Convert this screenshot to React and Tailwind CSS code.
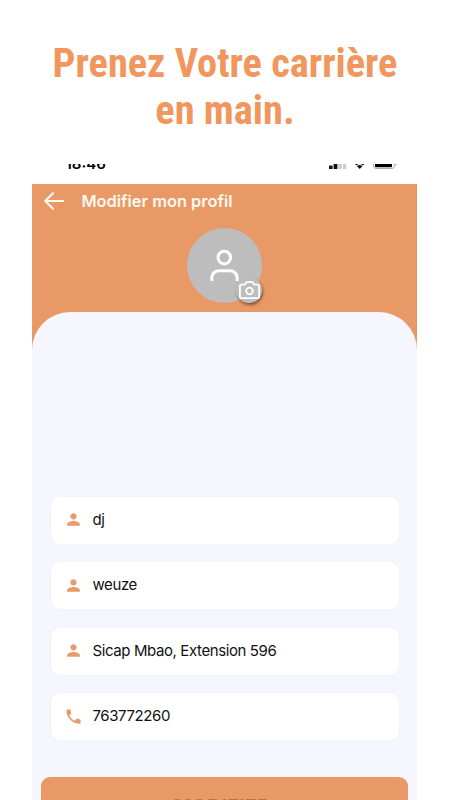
import { MdPerson, MdPhone } from "react-icons/md";

const fields = [
  { icon: MdPerson, value: "dj" },
  { icon: MdPerson, value: "weuze" },
  { icon: MdPerson, value: "Sicap Mbao, Extension 596" },
  { icon: MdPhone, value: "763772260" },
];

function StatusBar() {
  return (
    <div className="h-[19.5px] flex justify-between items-start overflow-hidden pl-[33.5px] pr-[20px]">
      <span className="text-[15px] leading-[18px] font-semibold text-black -mt-[9px]">18:46</span>

      {/* Signal, wifi and battery, cut off by the top edge */}
      <svg width="70" height="8" viewBox="0 0 70 8">
        <rect x="2" y="1.5" width="3.6" height="3.5" rx="0.6" fill="#111" />
        <rect x="6.6" y="0" width="3.8" height="5" rx="0.6" fill="#111" />
        <rect x="11.4" y="0" width="3.4" height="5" rx="0.6" fill="#ccc" />
        <rect x="16" y="0" width="3.2" height="5" rx="0.6" fill="#ccc" />
        <path d="M28 0h9.4l-1.5 1.4a5 5 0 0 0-6.4 0z" fill="#111" />
        <path d="M30 2.2a4 4 0 0 1 5.4 0L32.7 5z" fill="#111" />
        <path d="M46.5 0v1.8a2.7 2.7 0 0 0 2.7 2.7h15.6a2.7 2.7 0 0 0 2.7-2.7V0" fill="none" stroke="#aaa" />
        <path d="M69 0v1.5" stroke="#aaa" />
        <path d="M48 0h17v2.4a0.8 0.8 0 0 1-.8.8H48.8a.8.8 0 0 1-.8-.8z" fill="#000" />
      </svg>
    </div>
  );
}

function Header() {
  return (
    <div className="flex items-center pl-[12px] pt-[8.5px]">
      <svg width="20" height="18" viewBox="0 0 20 18" fill="none" stroke="#fff8ee" strokeWidth="2.2" strokeLinecap="round" strokeLinejoin="round">
        <path d="M19 9H1.5M9 1.2L1.2 9L9 16.8" />
      </svg>
      <h2 className="ml-[17.5px] -mt-[1px] text-[16.4px] leading-[18px] font-semibold text-[#fff8ee]">Modifier mon profil</h2>
    </div>
  );
}

function Avatar() {
  return (
    <div className="relative w-[75px] h-[75px] mt-[18px] mx-auto rounded-full bg-[#bdbdbd]">
      <svg width="75" height="75" viewBox="0 0 75 75" fill="none" stroke="#fff" strokeWidth="3">
        <circle cx="37.3" cy="29.6" r="6.3" />
        <path d="M24.8 53v-3.2a7 7 0 0 1 7-7h11.4a7 7 0 0 1 7 7V53" />
      </svg>

      {/* Photo button */}
      <div className="absolute left-[49px] top-[49px] w-[26px] h-[26px] rounded-full bg-[#bdbdbd] shadow-[1px_2px_3px_rgba(0,0,0,0.45)]">
        <svg width="26" height="26" viewBox="0 0 26 26" fill="none" stroke="#fff" strokeWidth="1.8" strokeLinejoin="round">
          <path d="M5.7 7.6h3.2l1.3-2.4h6.6l1.3 2.4h3.2a1.8 1.8 0 0 1 1.8 1.8v10a1.8 1.8 0 0 1-1.8 1.8H5.7a1.8 1.8 0 0 1-1.8-1.8v-10a1.8 1.8 0 0 1 1.8-1.8z" />
          <circle cx="13.5" cy="14" r="3.3" />
        </svg>
      </div>
    </div>
  );
}

function Field({ icon: Icon, value }) {
  return (
    <div className="h-[47px] flex items-center rounded-[9px] bg-white pl-[13.5px] shadow-[0_0_3px_rgba(0,0,0,0.04)]">
      <Icon className="size-[19px] -mt-[1px] text-[#e79b68]" />
      <span className="ml-[9.5px] text-[15px] tracking-[-0.4px] text-[#111]">{value}</span>
    </div>
  );
}

export default function App() {
  return (
    <main className="h-[800px] overflow-hidden bg-white font-['Inter',sans-serif]">
      <h1 className="h-[164px] pt-[40px] text-center text-[40.4px] leading-[47px] font-bold text-[#f1975e] font-['Roboto_Condensed','Roboto',sans-serif] [font-stretch:75%]">
        Prenez Votre carrière
        <br />
        en main.
      </h1>

      <div className="w-[385px] ml-[32px]">
        <StatusBar />
        <div className="h-[617px] bg-[#e89966]">
          <Header />
          <Avatar />

          <div className="h-[489px] mt-[9px] rounded-t-[38px] bg-[#f5f6fe] pt-[184.5px]">
            <div className="flex flex-col gap-[18.5px] pl-[18.5px] pr-[18px]">
              {fields.map((field) => (
                <Field key={field.value} {...field} />
              ))}
            </div>

            <button className="flex justify-center w-[367px] h-[60px] mt-[37px] ml-[9px] rounded-[9px] bg-[#e89966] pt-[17.5px] pr-[6px] text-[20px] leading-[24px] font-bold text-[#b8743f]">
              MODIFIER
            </button>
          </div>
        </div>
      </div>
    </main>
  );
}
